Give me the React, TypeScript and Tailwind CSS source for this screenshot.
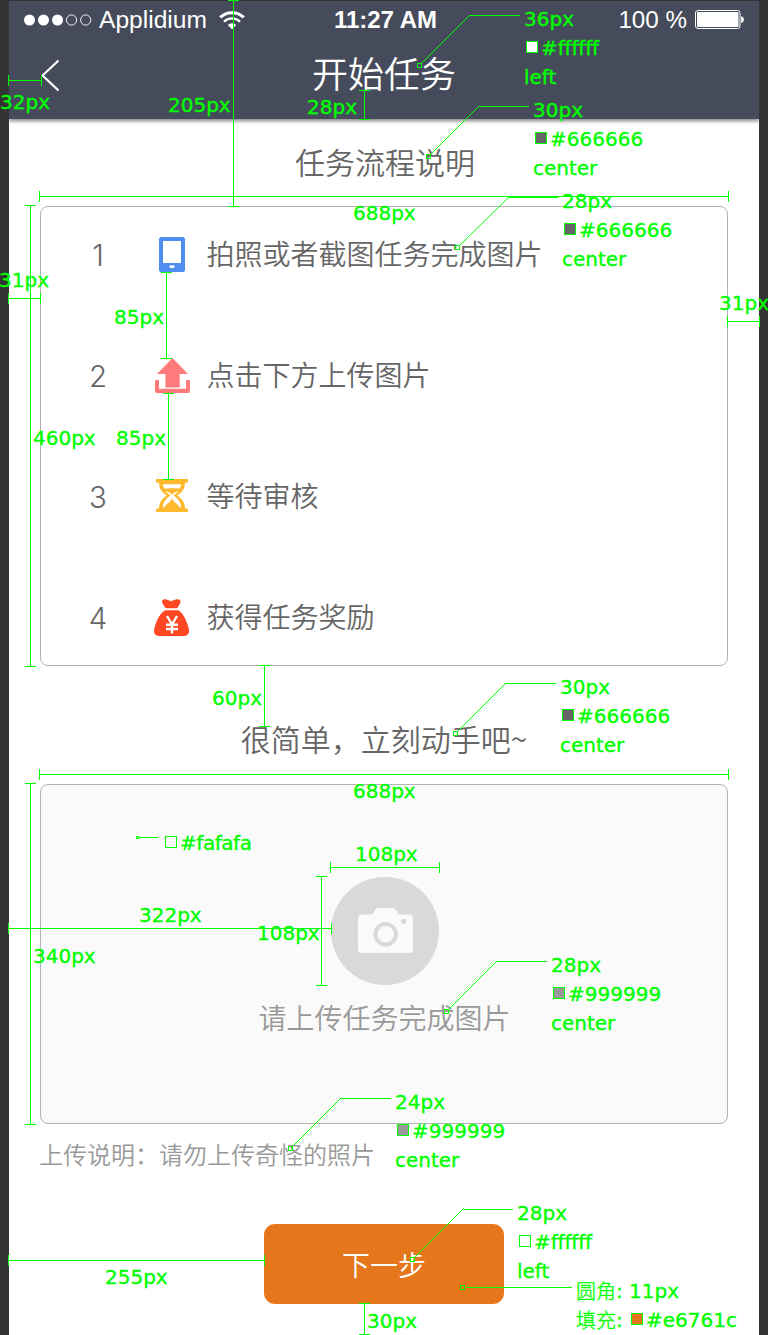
import type { ReactNode } from "react";

const CJK = "font-['Noto_Sans_CJK_SC',sans-serif]";

function PhoneIcon() {
  return (
    <svg width="36" height="38" viewBox="0 0 36 38">
      <rect x="5" y="1" width="26" height="35" rx="2.5" fill="#4f8df0" />
      <rect x="9" y="5" width="18" height="22" fill="#fff" />
      <rect x="15.5" y="29.3" width="5" height="2.6" rx="0.8" fill="#fff" />
    </svg>
  );
}

function UploadIcon() {
  return (
    <svg width="36" height="38" viewBox="0 0 36 38" fill="#ff7b7b">
      <path d="M18.5 1 L34 17 H25.7 V30.5 H11.5 V17 H3 Z" />
      <path d="M1 23 H5 V31.8 H32 V23 H36 V34 Q36 36 34 36 H3 Q1 36 1 34 Z" />
    </svg>
  );
}

function HourglassIcon() {
  return (
    <svg width="36" height="38" viewBox="0 0 36 38">
      <path d="M2 1 H34 V4.4 H31 C31 11.5 27.5 14.3 23.2 17.5 C27.5 20.7 31 23.5 31 30.6 H34 V34 H2 V30.6 H5 C5 23.5 8.5 20.7 12.8 17.5 C8.5 14.3 5 11.5 5 4.4 H2 Z" fill="#ffb92e" />
      <path d="M9 6.2 H27 C26.8 8.4 26.2 9.6 25.3 10.8 C22 10 14 10 10.7 10.8 C9.8 9.6 9.2 8.4 9 6.2 Z" fill="#fff" />
      <path d="M0 5.5 H4.6 C5 11.5 8 14.5 11.5 17.5 C8 20.5 5 23.5 4.6 29.5 H0 Z M36 5.5 H31.4 C31 11.5 28 14.5 24.5 17.5 C28 20.5 31 23.5 31.4 29.5 H36 Z" fill="#fff" />
      <path d="M11 13 C13 15 15 16.2 16.6 17.5 C12.5 20.5 9.2 23 9 29.3 H10.5 C12 25.5 17 24.5 18 20 C19 24.5 24 25.5 25.5 29.3 H27 C26.8 23 23.5 20.5 19.4 17.5 C21 16.2 23 15 25 13 C22 14 19 14.5 18 17 C17 14.5 14 14 11 13 Z" fill="#fff" />
    </svg>
  );
}

function MoneyBagIcon() {
  return (
    <svg width="36" height="38" viewBox="0 0 36 38">
      <path d="M9.5 0.6 C12 -0.4 14 1 17 2.3 C20 1 22.5 -0.4 25 0.6 C28.5 2 25 6 23.8 8.4 Q23.3 9.2 22 9.2 H13 Q11.7 9.2 11 8.4 C9.7 6 6 2.2 9.5 0.6 Z" fill="#ff4722" />
      <path d="M11.5 11.3 H24 C28 13 31 18.5 33 24 C34 27 35 29.5 35 32 Q35 37 29.5 37 H5.5 Q0 37 0 32 C0 29.5 1 27 2 24 C4 18.5 7.5 13 11.5 11.3 Z" fill="#ff4722" />
      <path d="M13 17 L18 25.5 L23 17 M18 24.5 V34.5 M12 25.8 H24 M12 30 H24" fill="none" stroke="#fff" strokeWidth="2.4" />
    </svg>
  );
}

function CameraIcon() {
  return (
    <svg width="56" height="46" viewBox="0 0 56 46">
      <path d="M4 6.5 H13 C16 6.5 15.8 0 21 0 H34 C39.2 0 39 6.5 42 6.5 H51 Q55 6.5 55 10.5 V41 Q55 45 51 45 H4 Q0 45 0 41 V10.5 Q0 6.5 4 6.5 Z" fill="#fafafa" />
      <circle cx="27.7" cy="26.3" r="10.3" fill="none" stroke="#d9d9d9" strokeWidth="4" />
      <circle cx="45.5" cy="13.3" r="2.6" fill="#d9d9d9" />
    </svg>
  );
}

function StatusBar() {
  return (
    <div className="grid h-[38px] grid-cols-3 items-center text-[24px] leading-[38px] text-white">
      <div className="flex items-center pl-[15px]">
        <svg width="69" height="12" viewBox="0 0 69 12">
          <circle cx="5.5" cy="6" r="5.5" fill="#fff" />
          <circle cx="19.5" cy="6" r="5.5" fill="#fff" />
          <circle cx="33.5" cy="6" r="5.5" fill="#fff" />
          <circle cx="47.5" cy="6" r="5.1" fill="none" stroke="#fff" strokeWidth="0.9" />
          <circle cx="61.7" cy="6" r="5.1" fill="none" stroke="#fff" strokeWidth="0.9" />
        </svg>
        <span className="ml-[6px] w-[120px] font-['Liberation_Sans',Arial,sans-serif] text-[24.6px]">Applidium</span>
        <svg width="26" height="19" viewBox="0 0 26 19" className="shrink-0">
          <path d="M1.2 6.4 A17 17 0 0 1 24.8 6.4" fill="none" stroke="#fff" strokeWidth="3" />
          <path d="M5 10.6 A11.5 11.5 0 0 1 21 10.6" fill="none" stroke="#fff" strokeWidth="2.4" />
          <path d="M8.8 14 A6 6 0 0 1 17.2 14 L13 18.3 Z" fill="#fff" />
        </svg>
      </div>
      <div className="pl-[3px] text-center font-['Liberation_Sans',Arial,sans-serif] text-[24px] font-bold">11:27 AM</div>
      <div className="flex items-center justify-end pr-[14px]">
        <span className="mr-[8px] font-['Liberation_Sans',Arial,sans-serif] text-[24.2px]">100 %</span>
        <svg width="50" height="20" viewBox="0 0 50 20">
          <rect x="0.5" y="0.5" width="44.5" height="18" rx="2.5" fill="none" stroke="#fff" />
          <rect x="2" y="2" width="41.5" height="15" rx="1" fill="#fff" />
          <path d="M46.2 6 Q49 7 49 9.5 Q49 12 46.2 13 Z" fill="#fff" />
        </svg>
      </div>
    </div>
  );
}

function Header() {
  return (
    <header className="relative z-10 h-[118px] shrink-0 bg-[#454b5a] shadow-[0_2px_4px_rgba(0,0,0,0.5)]">
      <StatusBar />
      <div className="grid h-[74px] grid-cols-[60px_1fr_60px] items-center text-white">
        <svg width="20" height="34" viewBox="0 0 20 34" className="ml-[32px]">
          <path d="M17.5 1.5 L1.5 16.5 L17.5 31.5" fill="none" stroke="#fff" strokeWidth="2.2" />
        </svg>
        <h1 className="h-[74px] text-center text-[36px] leading-[66px] font-[350]">开始任务</h1>
      </div>
    </header>
  );
}

const steps: { icon: ReactNode; text: string }[] = [
  { icon: <PhoneIcon />, text: "拍照或者截图任务完成图片" },
  { icon: <UploadIcon />, text: "点击下方上传图片" },
  { icon: <HourglassIcon />, text: "等待审核" },
  { icon: <MoneyBagIcon />, text: "获得任务奖励" },
];

function Screen() {
  return (
    <main className={`flex h-[1334px] w-[750px] flex-col bg-white text-[#666] ${CJK}`}>
      <Header />
      <h2 className="h-[87px] shrink-0 pl-[2px] text-center text-[30px] leading-[84px] font-[350]">任务流程说明</h2>
      <ol className="mx-[31px] flex h-[460px] shrink-0 flex-col gap-[63px] rounded-[8px] border border-[#b2b2b2] pt-[19px]">
        {steps.map((step, i) => (
          <li key={step.text} className="flex h-[58px] items-center">
            <span className="ml-[39px] w-[35px] pl-px text-center font-['Inter',sans-serif] text-[29.5px] leading-[58px] font-[350]">{i + 1}</span>
            <span className="ml-[39px] w-[52.5px]">{step.icon}</span>
            <span className="h-[58px] text-[28px] leading-[54px] font-[350]">{step.text}</span>
          </li>
        ))}
      </ol>
      <h2 className="h-[118px] shrink-0 pt-[13px] text-center text-[30px] leading-[118px] font-[350]">很简单，立刻动手吧~</h2>
      <div className="mx-[31px] flex h-[340px] shrink-0 flex-col items-center rounded-[8px] border border-[#b2b2b2] bg-[#fafafa] pt-[92px]">
        <div className="ml-[2px] flex h-[108px] w-[108px] items-center justify-center rounded-full bg-[#d9d9d9] pl-[2px]">
          <CameraIcon />
        </div>
        <p className="mt-[7px] ml-px text-[28px] leading-[50px] font-[350] text-[#999]">请上传任务完成图片</p>
      </div>
      <p className="ml-[30px] h-[100px] shrink-0 text-[24px] leading-[60px] font-[350] text-[#999]">上传说明：请勿上传奇怪的照片</p>
      <button className="h-[80px] w-[240px] shrink-0 self-center rounded-[11px] bg-[#e6761c] text-[28px] leading-[80px] font-[350] text-white">
        下一步
      </button>
    </main>
  );
}

/* Horizontal measures: [y, x1, x2]; vertical measures: [x, y1, y2]. */
const horizontal = [
  [80, 8, 41], [196, 39, 728], [298, 8, 40], [321, 727, 759], [774, 39, 728],
  [867, 330, 439], [928, 8, 331], [1260, 8, 264],
];
const vertical = [
  [233, 0, 206], [364, 90, 119], [30, 205, 666], [166, 272, 358], [168, 393, 479],
  [264, 665, 726], [30, 783, 1124], [321, 876, 985], [364, 1303, 1334],
];
/* Leaders: anchor point, bend point, end of the horizontal run. */
const leaders = [
  [419, 65, 469, 15, 520], [428, 156, 478, 106, 529], [457, 247, 508, 197, 558],
  [455, 733, 505, 683, 556], [446, 1011, 496, 961, 547], [290, 1148, 340, 1098, 391],
  [412, 1259, 462, 1209, 513], [462, 1287, 466, 1287, 572],
];

function MeasureLines() {
  return (
    <svg width="768" height="1335" className="absolute inset-0" shapeRendering="crispEdges" fill="none" stroke="#0f0" strokeWidth="1">
      {horizontal.map(([y, a, b]) => (
        <path key={`h${y}`} d={`M${a} ${y + 0.5}H${b + 1}M${a + 0.5} ${y - 5}v11M${b + 0.5} ${y - 5}v11`} />
      ))}
      {vertical.map(([x, a, b]) => (
        <path key={`v${x}-${a}`} d={`M${x + 0.5} ${a}V${b + 1}M${x - 5} ${a + 0.5}h11M${x - 5} ${b + 0.5}h11`} />
      ))}
      {leaders.map(([x, y, bx, by, ex]) => (
        <g key={`l${x}-${y}`}>
          <rect x={x - 1.5} y={y - 1.5} width="4" height="4" />
          {by !== y && <path d={`M${x + 2.5} ${y - 1.5}L${bx + 0.5} ${by + 0.5}`} shapeRendering="auto" />}
          <path d={`M${bx} ${by + 0.5}H${ex}`} />
        </g>
      ))}
      <path d="M136.5 836.5h2v2h-2zM138 837.5H158" />
    </svg>
  );
}

function Label({ at, children }: { at: string; children: ReactNode }) {
  return <div className={`absolute whitespace-nowrap ${at}`}>{children}</div>;
}

function Swatch({ fill, children }: { fill: string; children: ReactNode }) {
  return (
    <div className="flex h-[29px] items-center">
      <span className={`mr-[3px] mb-[4px] ml-[2px] h-[12px] w-[12px] border border-[#0f0] ${fill}`} />
      {children}
    </div>
  );
}

function Note({ at, size, color, fill, align }: { at: string; size: string; color: string; fill: string; align: string }) {
  return (
    <Label at={at}>
      <div>{size}</div>
      <Swatch fill={fill}>{color}</Swatch>
      <div>{align}</div>
    </Label>
  );
}

function Annotations() {
  return (
    <div className="pointer-events-none absolute inset-0 z-20 overflow-hidden font-['DejaVu_Sans','Noto_Sans_CJK_SC',sans-serif] text-[20px] leading-[29px] text-[#0f0] [-webkit-text-stroke:0.35px_#0f0]">
      <MeasureLines />
      <Label at="left-0 top-[88px]">32px</Label>
      <Label at="left-[168px] top-[91px]">205px</Label>
      <Label at="left-[307px] top-[93px]">28px</Label>
      <Label at="left-[353px] top-[199px]">688px</Label>
      <Label at="left-[-1px] top-[266px]">31px</Label>
      <Label at="left-[719px] top-[289px]">31px</Label>
      <Label at="left-[114px] top-[303px]">85px</Label>
      <Label at="left-[116px] top-[424px]">85px</Label>
      <Label at="left-[33px] top-[424px]">460px</Label>
      <Label at="left-[212px] top-[684px]">60px</Label>
      <Label at="left-[353px] top-[777px]">688px</Label>
      <Label at="left-[163px] top-[829px] tracking-[-0.45px]">
        <Swatch fill="bg-[#fafafa]">#fafafa</Swatch>
      </Label>
      <Label at="left-[355px] top-[840px]">108px</Label>
      <Label at="left-[139px] top-[901px]">322px</Label>
      <Label at="left-[257px] top-[919px]">108px</Label>
      <Label at="left-[33px] top-[942px]">340px</Label>
      <Label at="left-[105px] top-[1263px]">255px</Label>
      <Label at="left-[367px] top-[1307px]">30px</Label>
      <Note at="left-[524px] top-[5px]" size="36px" color="#ffffff" fill="bg-white" align="left" />
      <Note at="left-[533px] top-[96px]" size="30px" color="#666666" fill="bg-[#666]" align="center" />
      <Note at="left-[562px] top-[187px]" size="28px" color="#666666" fill="bg-[#666]" align="center" />
      <Note at="left-[560px] top-[673px]" size="30px" color="#666666" fill="bg-[#666]" align="center" />
      <Note at="left-[551px] top-[951px]" size="28px" color="#999999" fill="bg-[#999]" align="center" />
      <Note at="left-[395px] top-[1088px]" size="24px" color="#999999" fill="bg-[#999]" align="center" />
      <Note at="left-[517px] top-[1199px]" size="28px" color="#ffffff" fill="bg-white" align="left" />
      <Label at="left-[576px] top-[1277px]">
        <div className="flex h-[29px]">
          <span className="flex w-[53px]"><span className="font-['Noto_Sans_CJK_SC',sans-serif] leading-[27px] font-light">圆角</span>:</span>11px
        </div>
        <div className="flex h-[29px]">
          <span className="flex w-[53px]"><span className="font-['Noto_Sans_CJK_SC',sans-serif] leading-[27px] font-light">填充</span>:</span>
          <Swatch fill="bg-[#e6761c]">#e6761c</Swatch>
        </div>
      </Label>
    </div>
  );
}

export default function App() {
  return (
    <div className="relative h-[1335px] w-[768px] overflow-hidden bg-[#333] px-[9px] pt-px">
      <div className="overflow-hidden">
        <Screen />
      </div>
      <Annotations />
    </div>
  );
}
